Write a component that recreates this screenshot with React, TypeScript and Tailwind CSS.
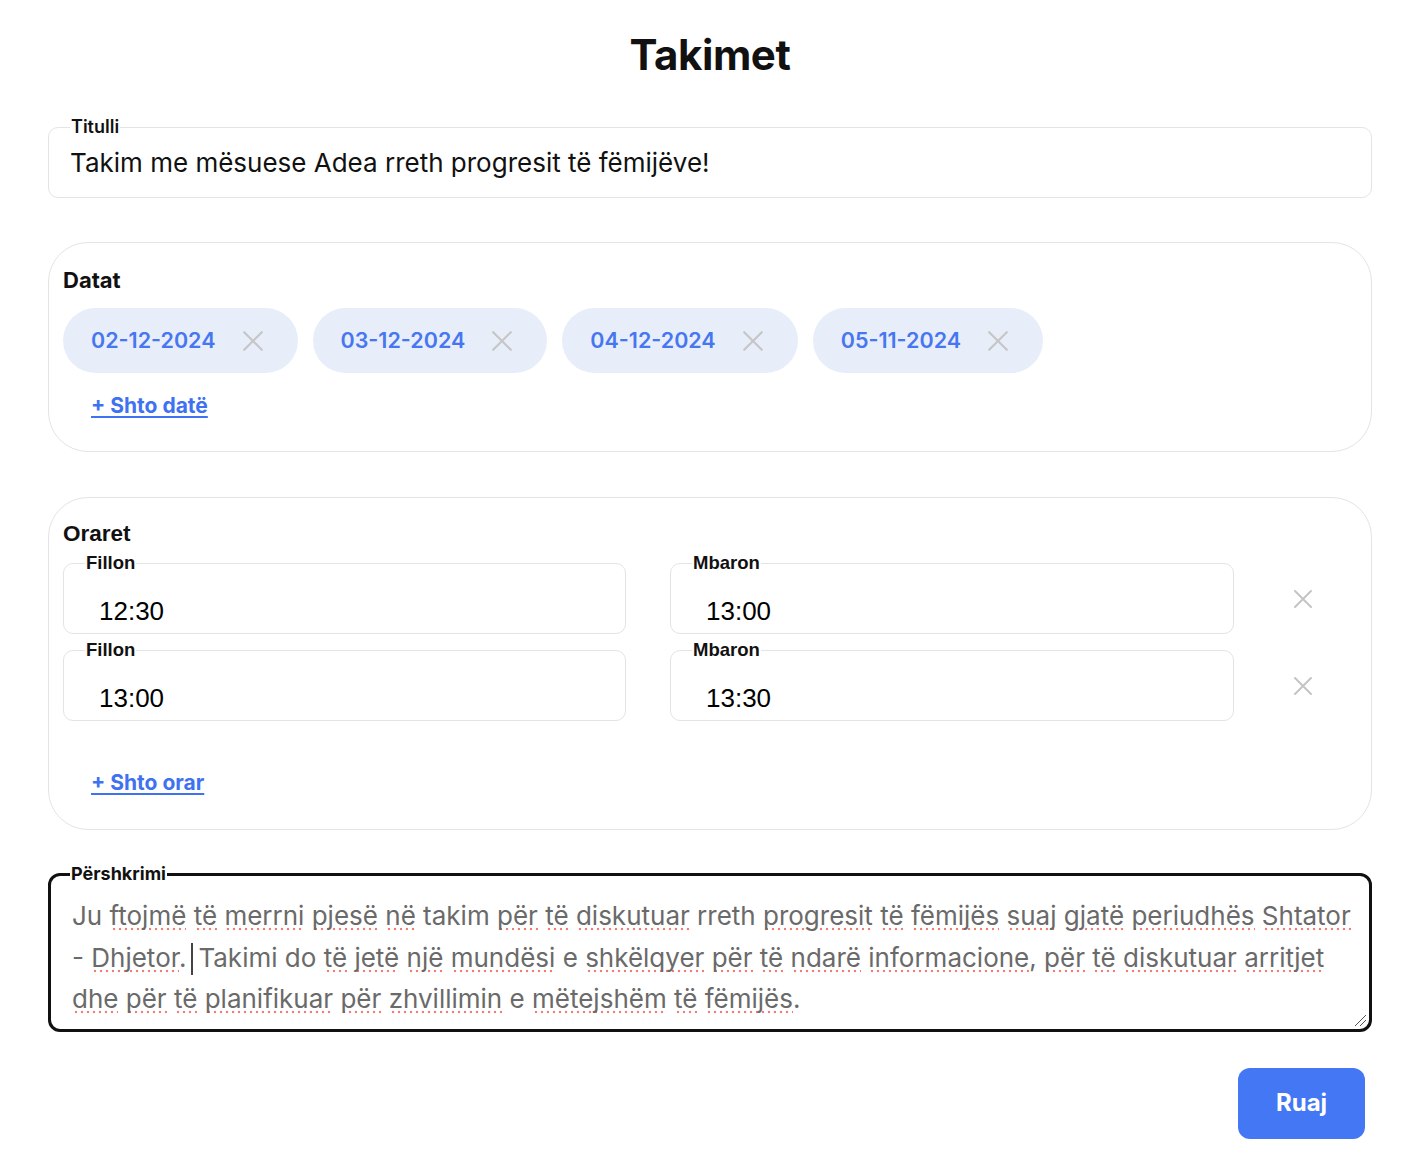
import React from 'react';

const DATES = ['02-12-2024', '03-12-2024', '04-12-2024', '05-11-2024'];

const TIMES = [
  { start: '12:30', end: '13:00' },
  { start: '13:00', end: '13:30' },
];

// Words the browser flagged in the description (spellcheck dots)
type Piece = { t: string; bad?: boolean };
const DESC_LINES: Piece[][] = [
  [
    { t: 'Ju ' }, { t: 'ftojmë', bad: true }, { t: ' ' }, { t: 'të', bad: true }, { t: ' ' },
    { t: 'merrni', bad: true }, { t: ' ' }, { t: 'pjesë', bad: true }, { t: ' ' }, { t: 'në', bad: true },
    { t: ' takim ' }, { t: 'për', bad: true }, { t: ' ' }, { t: 'të', bad: true }, { t: ' ' },
    { t: 'diskutuar', bad: true }, { t: ' rreth ' }, { t: 'progresit', bad: true }, { t: ' ' },
    { t: 'të', bad: true }, { t: ' ' }, { t: 'fëmijës', bad: true }, { t: ' ' }, { t: 'suaj', bad: true },
    { t: ' ' }, { t: 'gjatë', bad: true }, { t: ' ' }, { t: 'periudhës', bad: true }, { t: ' ' },
    { t: 'Shtator', bad: true },
  ],
  [
    { t: '- ' }, { t: 'Dhjetor', bad: true }, { t: '.' }, { t: '|caret|' }, { t: 'Takimi do ' },
    { t: 'të', bad: true }, { t: ' ' }, { t: 'jetë', bad: true }, { t: ' ' }, { t: 'një', bad: true },
    { t: ' ' }, { t: 'mundësi', bad: true }, { t: ' e ' }, { t: 'shkëlqyer', bad: true }, { t: ' ' },
    { t: 'për', bad: true }, { t: ' ' }, { t: 'të', bad: true }, { t: ' ' }, { t: 'ndarë', bad: true },
    { t: ' ' }, { t: 'informacione', bad: true }, { t: ', ' }, { t: 'për', bad: true }, { t: ' ' },
    { t: 'të', bad: true }, { t: ' ' }, { t: 'diskutuar', bad: true }, { t: ' ' }, { t: 'arritjet', bad: true },
  ],
  [
    { t: 'dhe', bad: true }, { t: ' ' }, { t: 'për', bad: true }, { t: ' ' }, { t: 'të', bad: true },
    { t: ' ' }, { t: 'planifikuar', bad: true }, { t: ' ' }, { t: 'për', bad: true }, { t: ' ' },
    { t: 'zhvillimin', bad: true }, { t: ' e ' }, { t: 'mëtejshëm', bad: true }, { t: ' ' },
    { t: 'të', bad: true }, { t: ' ' }, { t: 'fëmijës', bad: true }, { t: '.' },
  ],
];

function XIcon({ className = '' }: { className?: string }) {
  return (
    <svg viewBox="0 0 20 20" className={className} fill="none" stroke="currentColor" strokeWidth={2} strokeLinecap="round">
      <path d="M2 2L18 18M18 2L2 18" />
    </svg>
  );
}

function TimeField({ label, value }: { label: string; value: string }) {
  return (
    <fieldset className="border border-[#e4e4e4] rounded-[10px] pl-[21px] pt-[23px] pb-[7px]">
      <legend className="px-px text-[18.5px] leading-5 font-bold text-[#111]">{label}</legend>
      <div className="pl-[14px] text-[26px] leading-[30px] text-black">{value}</div>
    </fieldset>
  );
}

export default function App() {
  return (
    <div className="min-h-[1174px] bg-white px-12 text-[#111]" style={{ fontFamily: 'Inter, "Noto Sans", sans-serif' }}>

      {/* Page title */}
      <h1 className="pt-[30px] text-center text-[42px] leading-[50px] font-bold tracking-[-0.01em]">Takimet</h1>

      {/* Title input */}
      <fieldset className="mt-[37px] border border-[#e4e4e4] rounded-[10px] pl-[21px] pt-[10px] pb-[18px]">
        <legend className="px-px text-[18px] leading-5 font-semibold">Titulli</legend>
        <div className="text-[26px] leading-8">Takim me mësuese Adea rreth progresit të fëmijëve!</div>
      </fieldset>

      {/* Dates */}
      <div className="mt-[44px] border border-[#e4e4e4] rounded-[40px] pt-[23px] pl-[14px] pb-[31px]">
        <div className="text-[22px] leading-7 font-bold">Datat</div>
        <div className="mt-[14px] flex gap-[15px]">
          {DATES.map((d) => (
            <div key={d} className="h-[65px] flex items-center gap-[26px] rounded-full bg-[#e8edfa] pl-7 pr-[34px]">
              <span className="text-[21.5px] font-semibold text-[#4677f0]">{d}</span>
              <XIcon className="w-[22px] h-[22px] text-[#c6c6c6]" />
            </div>
          ))}
        </div>
        <a className="mt-[19px] ml-7 inline-block text-[21px] leading-7 font-bold text-[#3f72f0] underline underline-offset-[3px]">+ Shto datë</a>
      </div>

      {/* Times */}
      <div className="mt-[45px] border border-[#e4e4e4] rounded-[40px] pt-[22px] pl-[14px] pr-[14px] pb-[32px]">
        <div className="text-[22.5px] leading-7 font-bold" style={{ fontFamily: '"Liberation Sans", Arial, sans-serif' }}>Oraret</div>
        <div className="mt-[5px] flex flex-col gap-[6px]" style={{ fontFamily: '"Liberation Sans", Arial, sans-serif' }}>
          {TIMES.map((t, i) => (
            <div key={i} className="flex">
              <div className="w-[563px]"><TimeField label="Fillon" value={t.start} /></div>
              <div className="ml-[44px] w-[564px]"><TimeField label="Mbaron" value={t.end} /></div>
              <div className="flex-1 flex items-center justify-center pl-[15px] pt-[10px]">
                <XIcon className="w-5 h-5 text-[#c4c4c4]" />
              </div>
            </div>
          ))}
        </div>
        <a className="mt-[48px] ml-7 inline-block text-[21px] leading-7 font-bold text-[#3f72f0] underline underline-offset-[3px]">+ Shto orar</a>
      </div>

      {/* Description */}
      <fieldset className="mt-[34px] border-[3px] border-[#111] rounded-[12px] pl-[19px] pr-[14px] pt-[11px] pb-[9px] relative">
        <legend className="px-px text-[18px] leading-5 font-bold">Përshkrimi</legend>
        <div className="pl-[2px] text-[26px] leading-[41.5px] text-[#6a6a6a] whitespace-nowrap">
          {DESC_LINES.map((line, li) => (
            <div key={li}>
              {line.map((p, pi) =>
                p.t === '|caret|' ? (
                  <span key={pi} className="inline-block w-[2px] h-[32px] bg-[#444] align-middle mx-[5px]" />
                ) : p.bad ? (
                  <span key={pi} className="bg-[radial-gradient(circle,#f27d72_1.3px,transparent_1.6px)] bg-[length:6px_4px] bg-repeat-x bg-[position:left_1px_bottom_0px]">{p.t}</span>
                ) : (
                  <span key={pi}>{p.t}</span>
                )
              )}
            </div>
          ))}
        </div>
        {/* resize grip */}
        <svg viewBox="0 0 14 14" className="absolute right-[2px] bottom-[2px] w-[14px] h-[14px] text-[#555]" fill="none" stroke="currentColor" strokeWidth={1}>
          <path d="M2 13L13 2M7 13L13 7" />
        </svg>
      </fieldset>

      {/* Save */}
      <div className="mt-[36px] flex justify-end pr-[7px]">
        <button className="w-[127px] h-[71px] rounded-[12px] bg-[#4477f4] text-white text-[24px] font-bold">Ruaj</button>
      </div>
    </div>
  );
}
